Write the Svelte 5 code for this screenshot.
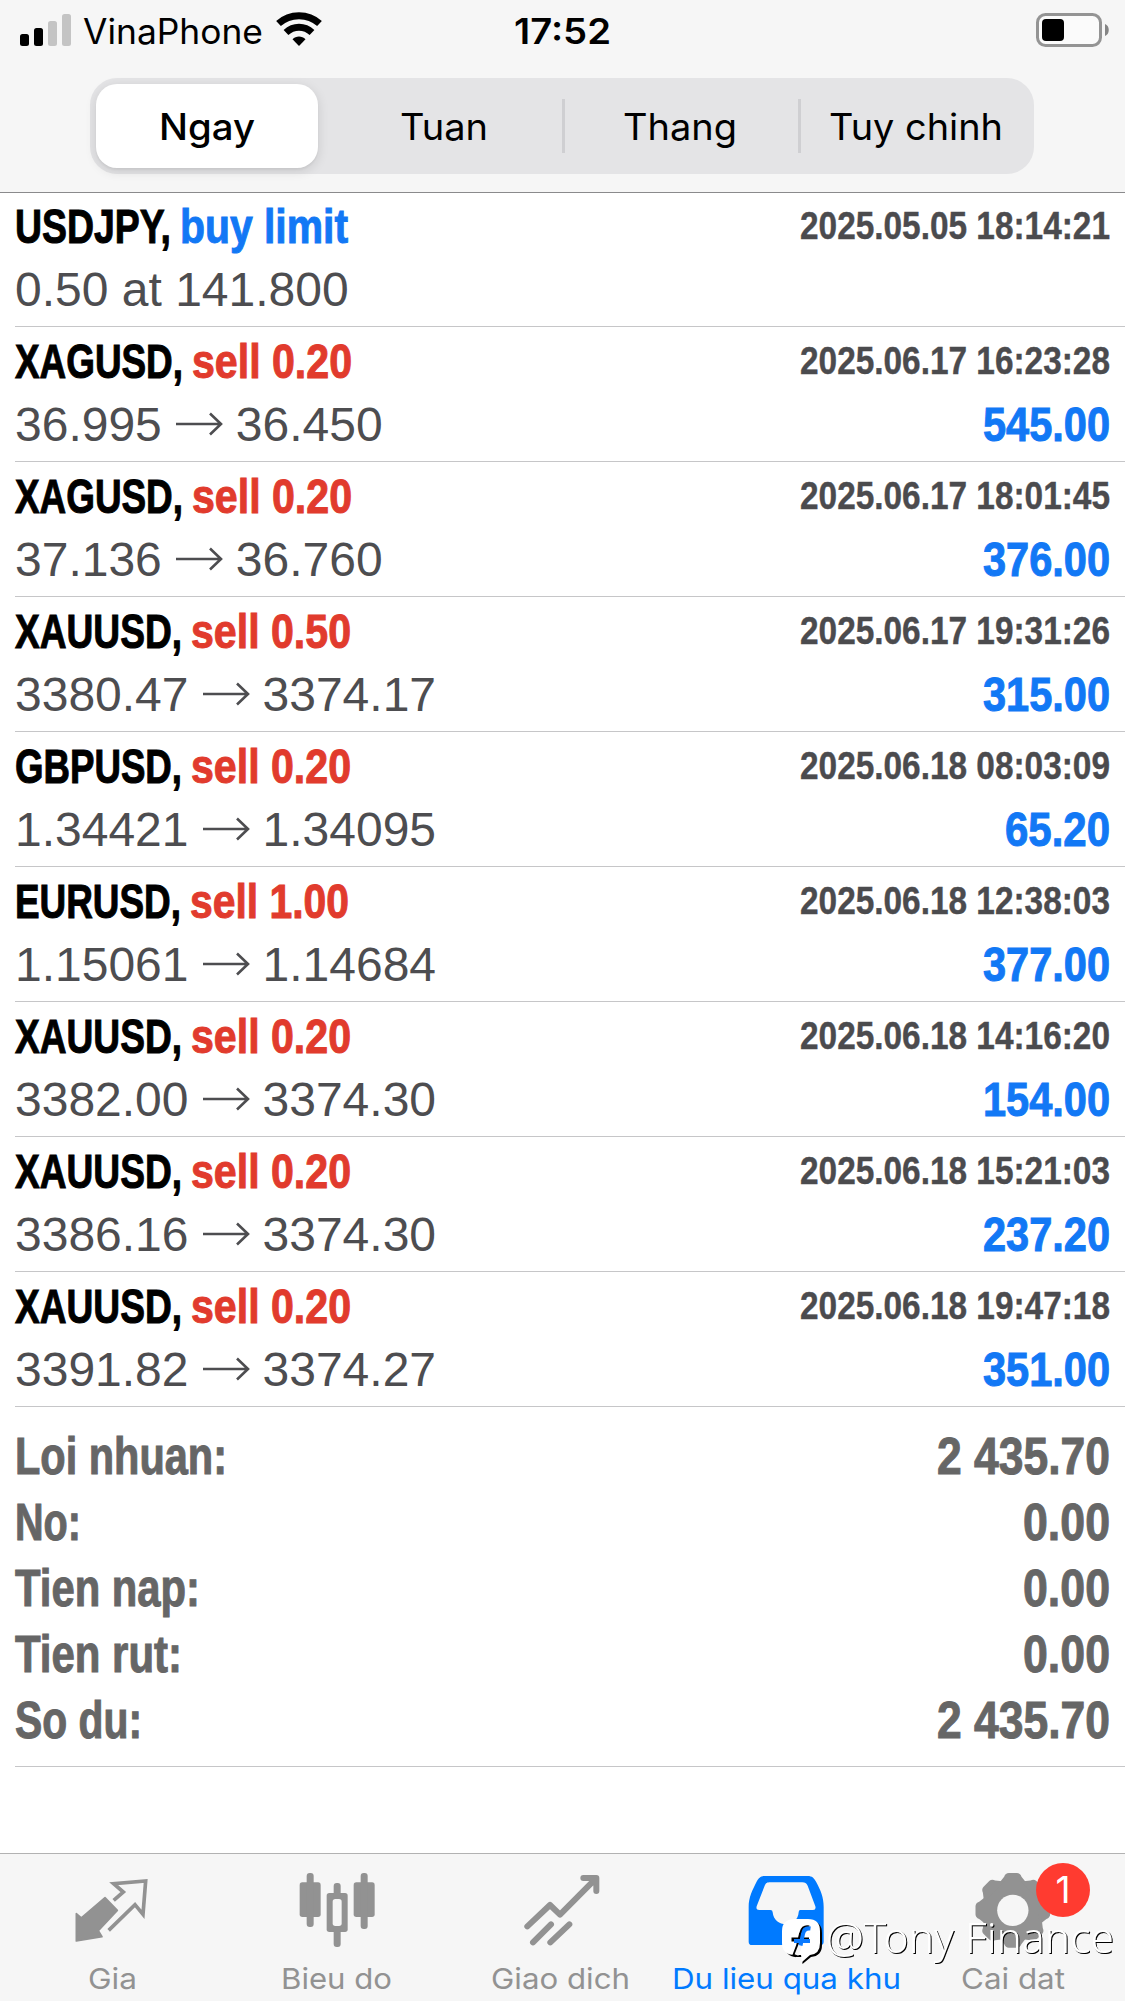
<script lang="ts">
    type Deal = {
        symbol: string;
        symbolWidth: number;
        side: string;
        sideWidth: number;
        time: string;
        open: string;
        close?: string;
        profit?: string;
    };

    const deals: Deal[] = [
        { symbol: 'USDJPY,', symbolWidth: 156, side: 'buy limit', sideWidth: 168, time: '2025.05.05 18:14:21', open: '0.50 at 141.800' },
        { symbol: 'XAGUSD,', symbolWidth: 168, side: 'sell 0.20', sideWidth: 160, time: '2025.06.17 16:23:28', open: '36.995', close: '36.450', profit: '545.00' },
        { symbol: 'XAGUSD,', symbolWidth: 168, side: 'sell 0.20', sideWidth: 160, time: '2025.06.17 18:01:45', open: '37.136', close: '36.760', profit: '376.00' },
        { symbol: 'XAUUSD,', symbolWidth: 167, side: 'sell 0.50', sideWidth: 160, time: '2025.06.17 19:31:26', open: '3380.47', close: '3374.17', profit: '315.00' },
        { symbol: 'GBPUSD,', symbolWidth: 167, side: 'sell 0.20', sideWidth: 160, time: '2025.06.18 08:03:09', open: '1.34421', close: '1.34095', profit: '65.20' },
        { symbol: 'EURUSD,', symbolWidth: 166, side: 'sell 1.00', sideWidth: 159, time: '2025.06.18 12:38:03', open: '1.15061', close: '1.14684', profit: '377.00' },
        { symbol: 'XAUUSD,', symbolWidth: 167, side: 'sell 0.20', sideWidth: 160, time: '2025.06.18 14:16:20', open: '3382.00', close: '3374.30', profit: '154.00' },
        { symbol: 'XAUUSD,', symbolWidth: 167, side: 'sell 0.20', sideWidth: 160, time: '2025.06.18 15:21:03', open: '3386.16', close: '3374.30', profit: '237.20' },
        { symbol: 'XAUUSD,', symbolWidth: 167, side: 'sell 0.20', sideWidth: 160, time: '2025.06.18 19:47:18', open: '3391.82', close: '3374.27', profit: '351.00' }
    ];

    const totals = [
        { label: 'Loi nhuan:', labelWidth: 212, value: '2 435.70', valueWidth: 173 },
        { label: 'No:', labelWidth: 66, value: '0.00', valueWidth: 87 },
        { label: 'Tien nap:', labelWidth: 185, value: '0.00', valueWidth: 87 },
        { label: 'Tien rut:', labelWidth: 167, value: '0.00', valueWidth: 87 },
        { label: 'So du:', labelWidth: 127, value: '2 435.70', valueWidth: 173 }
    ];

    const periods = [
        { name: 'Ngay', width: 96 },
        { name: 'Tuan', width: 88 },
        { name: 'Thang', width: 114 },
        { name: 'Tuy chinh', width: 174 }
    ];

    const tabs = [
        { id: 'quotes', name: 'Gia', width: 49 },
        { id: 'charts', name: 'Bieu do', width: 111 },
        { id: 'trade', name: 'Giao dich', width: 139 },
        { id: 'history', name: 'Du lieu qua khu', width: 229 },
        { id: 'settings', name: 'Cai dat', width: 104 }
    ];

    let period = $state('Ngay');
    let tab = $state('history');
</script>

<!-- text squeezed to a fixed width, as in a condensed face -->
{#snippet fitted(text: string, width: number, height: number, baseline: number, kind: string)}
    <svg class="fitted {kind}" {width} {height}>
        <text x="0" y={baseline} textLength={width} lengthAdjust="spacingAndGlyphs">{text}</text>
    </svg>
{/snippet}

<div class="screen">
    <header>
        <div class="status">
            <div class="carrier">
                <svg class="signal" width="52" height="34" viewBox="0 0 52 34">
                    <rect x="0" y="21" width="9" height="12" rx="2.5" />
                    <rect x="14" y="15" width="9" height="18" rx="2.5" />
                    <rect class="off" x="28" y="8" width="9" height="25" rx="2.5" />
                    <rect class="off" x="42" y="1" width="9" height="32" rx="2.5" />
                </svg>
                {@render fitted('VinaPhone', 180, 60, 44, 'carrier-name')}
                <svg class="wifi" width="46" height="34" viewBox="0 0 46 34">
                    <path d="M2.500 11.500C14 1 32 1 43.500 11.500" />
                    <path d="M10 20.500C17.500 13.500 28.500 13.500 36 20.500" />
                    <path class="dot" d="M23 34L16.500 27.200C20 23.500 26 23.500 29.500 27.200Z" />
                </svg>
            </div>
            {@render fitted('17:52', 97, 60, 44, 'clock')}
            <div class="power">
                <svg width="74" height="34" viewBox="0 0 74 34">
                    <rect class="shell" x="1.500" y="1.500" width="63" height="31" rx="8" />
                    <rect x="6" y="6" width="22" height="22" rx="4" />
                    <path class="nub" d="M69 11C74 12.500 74 21.500 69 23Z" />
                </svg>
            </div>
        </div>

        <div class="periods">
            {#each periods as p}
                <button class="period" class:active={period === p.name} onclick={() => (period = p.name)}>
                    {@render fitted(p.name, p.width, 84, 55.5, 'period-name')}
                </button>
            {/each}
        </div>
    </header>

    <main>
        {#each deals as deal}
            <div class="deal">
                <div class="line">
                    {@render fitted(deal.symbol, deal.symbolWidth, 63, 51, 'symbol')}
                    {@render fitted(deal.side, deal.sideWidth, 63, 51, deal.side.startsWith('sell') ? 'sell' : 'buy')}
                    <span class="spacer"></span>
                    {@render fitted(deal.time, 310, 63, 47, 'time')}
                </div>
                <div class="line second">
                    <span class="price">{deal.open}</span>
                    {#if deal.close}
                        <svg class="arrow" width="48" height="24" viewBox="0 0 48 24">
                            <path d="M1 12H46M35 1.500L46 12L35 22.500" />
                        </svg>
                        <span class="price">{deal.close}</span>
                    {/if}
                    <span class="spacer"></span>
                    {#if deal.profit}
                        {@render fitted(deal.profit, deal.profit.length > 5 ? 127 : 105, 71, 51, 'profit')}
                    {/if}
                </div>
            </div>
        {/each}

        <div class="totals">
            {#each totals as t}
                <div class="total">
                    {@render fitted(t.label, t.labelWidth, 66, 51, 'sum')}
                    {@render fitted(t.value, t.valueWidth, 66, 51, 'sum')}
                </div>
            {/each}
        </div>
    </main>

    <nav>
        {#each tabs as t}
            <button class="tab" class:active={tab === t.id} onclick={() => (tab = t.id)}>
                <svg class="icon" width="80" height="80" viewBox="0 0 240 240">
                    {#if t.id === 'quotes'}
                        <path class="stroke thin" d="M125 106L154 81L125 56L221 48L213 148L189 119L110 196" />
                        <path class="solid" d="M99 98L136 136L79 197L90 215L13 228V146L28 159Z" />
                    {:else if t.id === 'charts'}
                        <g transform="translate(3 0)">
                            <rect x="8" y="52" width="63" height="104" rx="8" />
                            <rect x="29" y="24" width="21" height="162" rx="9" />
                            <rect x="89" y="84" width="63" height="117" rx="8" />
                            <rect x="110" y="54" width="21" height="192" rx="9" />
                            <rect class="hole" x="107" y="102" width="27" height="81" rx="8" />
                            <rect x="170" y="52" width="63" height="104" rx="8" />
                            <rect x="191" y="24" width="21" height="168" rx="9" />
                        </g>
                    {:else if t.id === 'trade'}
                        <g transform="translate(6 0)">
                            <path class="stroke" d="M16 184L84 120L114 149L222 40M184 39H223V78M33 232L87 178M85 232L142 178" />
                            <path d="M196 39H223V66Z" />
                        </g>
                    {:else if t.id === 'history'}
                        <path d="M52 33H182C196 33 201 39 208 52C221 76 230 98 230 126V230Q230 240 220 240H15Q5 240 5 230V126C5 98 16 76 28 52C35 39 40 33 52 33Z" />
                        <path class="hole" d="M70 52H166C174 52 178 54 182 62L205 124Q208 135 198 135H160Q155 135 155 142C152 190 81 190 77 142Q77 135 70 135H37Q26 135 29 124L53 62C57 54 60 52 70 52Z" />
                    {:else}
                        <g transform="translate(119.500 136)">
                            <circle r="92" />
                            {#each [0, 45, 90, 135, 180, 225, 270, 315] as angle}
                                <path transform="rotate({angle})" d="M-44 -78L-26 -101Q-22 -112 -12 -112H12Q22 -112 26 -101L44 -78Z" />
                            {/each}
                            <circle class="hole" r="47" />
                        </g>
                    {/if}
                </svg>
                {@render fitted(t.name, t.width, 44, 32, 'tab-name')}
                {#if t.id === 'settings'}
                    <span class="badge">1</span>
                {/if}
            </button>
        {/each}
    </nav>

    <div class="watermark">
        <svg class="bubble" width="42" height="48" viewBox="0 0 42 48">
            <path class="shade" d="M15 2H28Q40 2 40 14V26Q40 37 29 38L20.500 45L20 38H15Q3 38 3 26V14Q3 2 15 2Z" />
            <path class="face" d="M13 0H26Q38 0 38 12V24Q38 35 28 36L20 43L19 36H13Q0 36 0 24V12Q0 0 13 0Z" />
            <path class="mark dark" d="M27 8.500Q20.500 7 19 15L16 27L12 37.500M9.500 20.500H27" />
            <path class="mark pale" d="M18.800 25L14.500 36" />
            <path class="mark" d="M28.500 9.500Q22 8.500 21 15L18.500 26.500M12 22H28" />
        </svg>
        {@render fitted('@Tony Finance', 288, 48, 34, 'handle')}
    </div>
</div>

<style>
    :global(body) {
        background: #fff;
    }

    .screen {
        position: relative;
        display: flex;
        flex-direction: column;
        width: 1125px;
        height: 2001px;
        overflow: hidden;
        background: #fff;
        font-family: Inter, sans-serif;
    }

    button {
        border: none;
        background: none;
        padding: 0;
        font: inherit;
    }

    .fitted {
        display: block;
        flex: none;
        overflow: visible;
    }

    header {
        box-sizing: border-box;
        height: 193px;
        background: #f6f6f6;
        border-bottom: 1px solid #8a8a8c;
    }

    .status {
        display: grid;
        grid-template-columns: 1fr auto 1fr;
        height: 78px;
    }

    .carrier {
        display: flex;
        padding-left: 20px;
    }

    .signal {
        margin-top: 13px;
        margin-right: 11px;
    }

    .signal .off {
        fill: #c4c4c4;
    }

    .carrier-name {
        font-size: 35px;
    }

    .wifi {
        margin-top: 12px;
        margin-left: 13px;
        fill: none;
        stroke: #000;
        stroke-width: 7;
    }

    .wifi .dot {
        fill: #000;
        stroke: none;
    }

    .clock {
        font-size: 35px;
        font-weight: 600;
    }

    .power {
        display: flex;
        justify-content: flex-end;
        padding: 13px 15px 0 0;
    }

    .shell {
        fill: #fbfbfb;
        stroke: #949494;
        stroke-width: 3;
    }

    .nub {
        fill: #858585;
    }

    .periods {
        display: grid;
        grid-template-columns: repeat(4, 1fr);
        box-sizing: border-box;
        width: 944px;
        height: 96px;
        margin-left: 90px;
        border-radius: 27px;
        background: #e4e4e6;
    }

    .period {
        display: flex;
        justify-content: center;
        margin: 6px 0;
        font-size: 37px;
    }

    .period.active {
        margin: 6px 8px 6px 6px;
        border-radius: 21px;
        background: #fff;
        box-shadow: 0 3px 12px rgba(0, 0, 0, 0.12), 0 2px 2px rgba(0, 0, 0, 0.04);
        font-weight: 500;
    }

    .period + .period:not(.active) + .period {
        background: linear-gradient(#cfcfd2, #cfcfd2) left center / 3px 54px no-repeat;
    }

    main {
        flex: 1;
        margin-top: -1px;
        font-family: 'Liberation Sans Narrow', 'Liberation Sans', Arial, sans-serif;
    }

    .deal {
        box-sizing: border-box;
        height: 135px;
        margin-left: 15px;
        padding-right: 15px;
        border-bottom: 1px solid #c6c6c8;
    }

    .line {
        display: flex;
        height: 63px;
    }

    .line.second {
        height: 71px;
    }

    .spacer {
        flex: 1;
    }

    .symbol,
    .sell,
    .buy,
    .profit {
        font-size: 48px;
        font-weight: 700;
        stroke-width: 1;
    }

    .symbol {
        margin-right: 9px;
        stroke: #000;
    }

    .sell {
        fill: #e13b2d;
        stroke: #e13b2d;
    }

    .buy,
    .profit {
        fill: #1278f5;
        stroke: #1278f5;
    }

    .time {
        font-size: 39px;
        font-weight: 700;
        fill: #4b4b4e;
        stroke: #4b4b4e;
        stroke-width: 0.4;
    }

    .price {
        font-family: 'Liberation Sans', Arial, sans-serif;
        font-size: 48px;
        line-height: 70px;
        color: #4d4d50;
        white-space: pre;
    }

    .arrow {
        margin: 22px 13px 0;
        fill: none;
        stroke: #4d4d50;
        stroke-width: 2.6;
    }

    .totals {
        margin-left: 15px;
        padding: 16px 15px 13px 0;
        border-bottom: 1px solid #c6c6c8;
    }

    .total {
        display: flex;
        justify-content: space-between;
    }

    .sum {
        font-size: 51px;
        font-weight: 700;
        fill: #666;
        stroke: #666;
        stroke-width: 1;
    }

    nav {
        display: grid;
        grid-template-columns: repeat(5, 1fr);
        height: 147px;
        background: #f6f6f6;
        border-top: 1px solid #b2b2b2;
    }

    .tab {
        position: relative;
        display: flex;
        flex-direction: column;
        align-items: center;
        padding-top: 11px;
        color: #929292;
        fill: #929292;
    }

    .tab.active {
        color: #007aff;
        fill: #007aff;
    }

    .icon {
        flex: none;
        margin-bottom: 12px;
        overflow: visible;
    }

    .stroke {
        fill: none;
        stroke: currentColor;
        stroke-width: 18;
        stroke-linecap: round;
        stroke-linejoin: round;
    }

    .stroke.thin {
        stroke-width: 11;
        stroke-linecap: butt;
        stroke-linejoin: miter;
    }

    .solid {
        stroke: currentColor;
        stroke-width: 5;
        stroke-linejoin: round;
    }

    .hole {
        fill: #f6f6f6;
    }

    .tab-name {
        font-size: 29px;
    }

    .badge {
        position: absolute;
        top: 9px;
        left: 135px;
        width: 54px;
        height: 54px;
        border-radius: 50%;
        background: #ff3b30;
        color: #fff;
        font-size: 37px;
        line-height: 54px;
        text-align: center;
    }

    .watermark {
        position: absolute;
        top: 1919px;
        left: 782px;
        display: flex;
        pointer-events: none;
    }

    .bubble {
        margin-right: 2px;
    }

    .bubble .face {
        fill: #fff;
    }

    .mark {
        fill: none;
        stroke: #0a7aff;
        stroke-width: 4;
    }

    .mark.dark {
        stroke: #000;
    }

    .mark.pale {
        stroke: #f6f6f6;
    }

    .handle {
        font-family: 'Noto Sans', sans-serif;
        font-size: 42px;
        font-weight: 300;
        fill: #fff;
        filter: drop-shadow(1.500px 1.500px 0 #000);
    }
</style>
